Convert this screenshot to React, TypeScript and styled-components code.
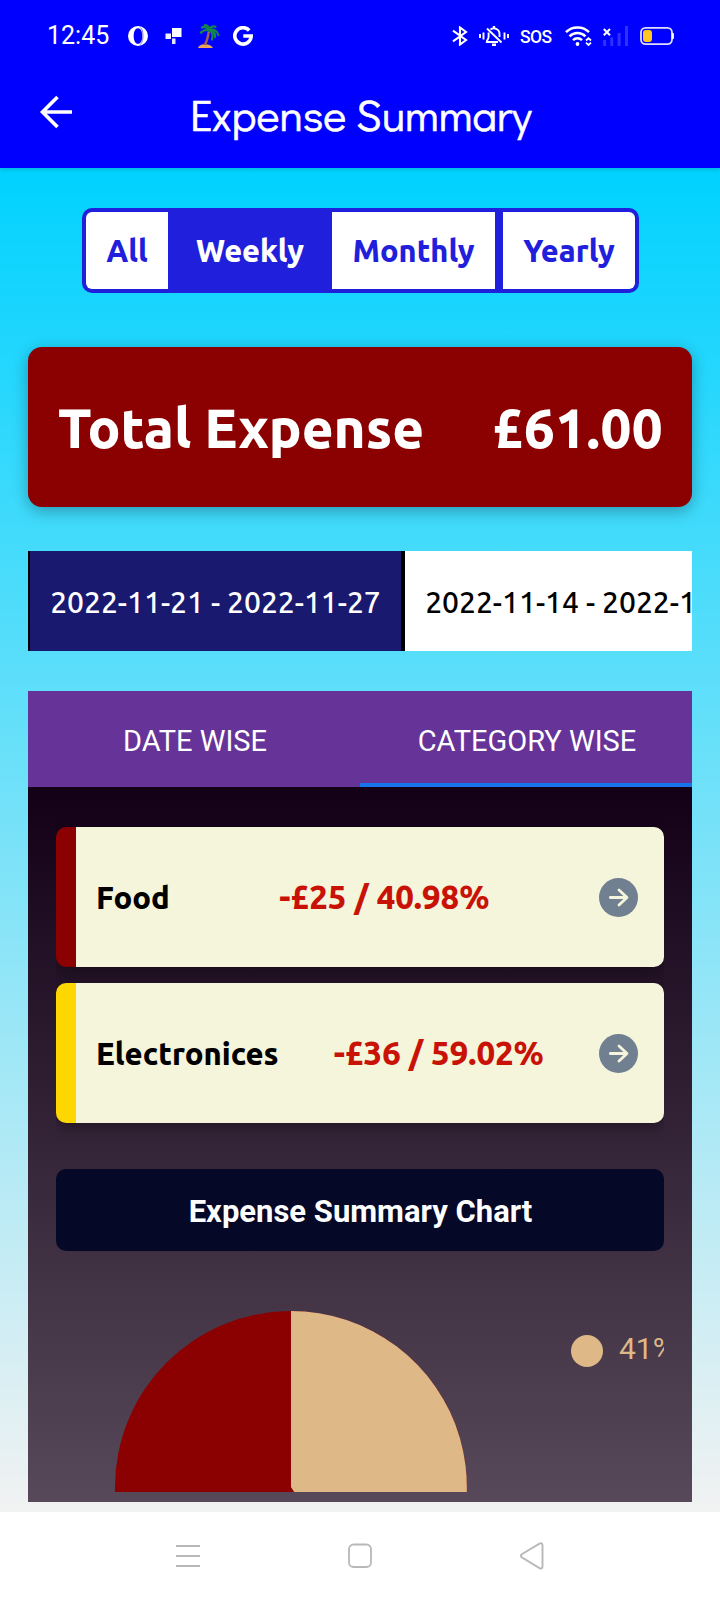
import React from "react";
import styled, { createGlobalStyle } from "styled-components";

const GlobalStyle = createGlobalStyle`
  *, *::before, *::after { box-sizing: border-box; }
  body { margin: 0; background: #fff; }
  button { border: 0; margin: 0; padding: 0; background: none; font: inherit; color: inherit; }
  svg { display: block; flex: none; }
`;

const ubuntu = `"Ubuntu", "Noto Sans", sans-serif`;
const roboto = `Roboto, sans-serif`;

const Screen = styled.div`
  width: 720px;
  height: 1600px;
  display: flex;
  flex-direction: column;
  overflow: hidden;
  font-family: ${ubuntu};
`;

const Header = styled.header`
  flex: none;
  height: 168px;
  background: #0000ff;
  color: #fff;
  box-shadow: 0 1px 5px rgba(0, 0, 0, 0.16);
  z-index: 1;
`;

const StatusBar = styled.div`
  height: 72px;
  padding: 0 46px 0 47px;
  display: flex;
  justify-content: space-between;
  align-items: center;
`;

const StatusGroup = styled.div<{ $gap: number }>`
  display: flex;
  align-items: center;
  gap: ${(p) => p.$gap}px;
`;

const Clock = styled.span`
  font: 400 25px/36px ${roboto};
  width: 68px;
`;

const Sos = styled.span`
  font: 500 17.5px/20px ${roboto};
  letter-spacing: -0.6px;
  width: 34px;
  padding-top: 2px;
`;

const AppBar = styled.div`
  height: 96px;
  padding: 0 0 16px 39px;
  display: flex;
  align-items: center;
`;

const Title = styled.h1`
  margin: 3px 0 0 117px;
  font: 400 43.8px/56px "Didact Gothic", Lato, sans-serif;
  -webkit-text-stroke: 0.6px #fff;
  white-space: nowrap;
`;

const Body = styled.main`
  flex: none;
  height: 1344px;
  padding: 40px 28px 0;
  display: flex;
  flex-direction: column;
  background: linear-gradient(#00d2ff, #f2f2f2);
`;

const Segments = styled.div`
  align-self: center;
  width: 557px;
  height: 85px;
  display: flex;
  border: 4px solid #1f1fdc;
  border-radius: 10px;
  background: #1f1fdc;
  overflow: hidden;
`;

const Segment = styled.button<{ $width: number; $active?: boolean; $gapBefore?: number }>`
  flex: none;
  width: ${(p) => p.$width}px;
  margin-left: ${(p) => p.$gapBefore ?? 0}px;
  padding-left: 1px;
  background: ${(p) => (p.$active ? "#1f1fdc" : "#fff")};
  color: ${(p) => (p.$active ? "#fff" : "#1f1fdc")};
  font: 800 30.7px/40px ${ubuntu};
`;

const TotalCard = styled.section`
  flex: none;
  height: 160px;
  margin-top: 54px;
  padding: 0 29px 0 30px;
  display: flex;
  justify-content: space-between;
  align-items: center;
  border-radius: 14px;
  background: #8b0000;
  color: #fff;
  font-size: 54.6px;
  font-weight: 800;
  white-space: nowrap;
  box-shadow: 0 4px 16px rgba(0, 0, 0, 0.3);
`;

const TotalAmount = styled.span`
  letter-spacing: 0.5px;
`;

const DateStrip = styled.div`
  flex: none;
  height: 100px;
  margin-top: 44px;
  display: flex;
  overflow: hidden;
`;

const DateRange = styled.button<{ $active?: boolean }>`
  flex: none;
  width: 375px;
  padding-top: 1px;
  border: solid #000;
  border-width: 0 2px;
  background: ${(p) => (p.$active ? "#191970" : "#fff")};
  color: ${(p) => (p.$active ? "#fff" : "#000")};
  font: 500 30px/40px ${ubuntu};
  white-space: nowrap;
`;

const Panel = styled.section`
  flex: none;
  margin-top: 40px;
  height: 811px;
  display: flex;
  flex-direction: column;
`;

const Tabs = styled.div`
  flex: none;
  height: 96px;
  display: grid;
  grid-template-columns: 1fr 1fr;
  background: #663399;
`;

const Tab = styled.button<{ $active?: boolean }>`
  padding: 7px 0 0 2px;
  border-bottom: 4px solid ${(p) => (p.$active ? "#1774ea" : "transparent")};
  color: #fff;
  font: 400 29px/36px ${roboto};
`;

const PanelBody = styled.div`
  height: 715px;
  padding: 0 28px 10px;
  background: linear-gradient(#130017, #574959);
`;

const CategoryList = styled.div`
  padding: 40px 0 46px;
  display: flex;
  flex-direction: column;
  gap: 16px;
  overflow: hidden;
`;

const CategoryCard = styled.div<{ $color: string }>`
  height: 140px;
  padding: 0 26px 0 20px;
  display: flex;
  justify-content: space-between;
  align-items: center;
  border-left: 20px solid ${(p) => p.$color};
  border-radius: 10px;
  background: #f5f5dc;
  box-shadow: 0 4px 14px rgba(0, 0, 0, 0.35);
`;

const CategoryName = styled.span`
  padding-top: 1px;
  font: 800 31px/40px ${ubuntu};
  color: #000;
`;

const Amount = styled.span`
  font: 800 33px/42px ${ubuntu};
  color: #c91206;
  white-space: nowrap;
`;

const ChartTitle = styled.div`
  height: 82px;
  padding: 3px 0 0 1px;
  display: flex;
  justify-content: center;
  align-items: center;
  border-radius: 10px;
  background: #060827;
  color: #fff;
  font: 700 31px/40px ${roboto};
`;

const Chart = styled.div`
  height: 241px;
  display: flex;
  overflow: hidden;
`;

const Legend = styled.div`
  flex: none;
  height: 32px;
  margin: 84px 0 0 104px;
  display: flex;
  gap: 16px;
  color: #deb887;
  font: 400 30px/28px ${roboto};
`;

const LegendDot = styled.span`
  width: 32px;
  height: 32px;
  border-radius: 50%;
  background: #deb887;
`;

const NavBar = styled.nav`
  height: 88px;
  padding-left: 2px;
  display: flex;
  justify-content: center;
  align-items: center;
  gap: 148px;
  background: #fff;
`;

const OperaIcon = () => (
  <svg width="24" height="20" viewBox="0 0 24 20" fill="#fff">
    <path fillRule="evenodd" d="M10 0a10 10 0 1 0 0 20a10 10 0 0 0 0-20ZM10 2.200c2.700 0 4.300 3.300 4.300 7.800s-1.600 7.800-4.300 7.800S5.700 14.500 5.700 10S7.300 2.200 10 2.200Z" />
    <path d="M12.500 1.400c3 2.800 3.800 12.800-.2 17.300" fill="none" stroke="#5c5cff" strokeWidth=".8" />
  </svg>
);

const BlocksIcon = () => (
  <svg width="20" height="17" viewBox="0 0 20 17">
    <path d="M7 0H16.500v9H7Z" fill="#fff" />
    <path d="M.5 5.500H6V11H.5Z" fill="#f0f0ff" />
    <path d="M7 10.500H10.500V16H7Z" fill="#e4e4ff" />
  </svg>
);

const PalmIcon = () => (
  <svg width="22" height="24" viewBox="0 0 22 24" fill="none">
    <path d="M0 24c.5-2.300 3.300-3.700 7-3.700s7 1.400 8 3.700Z" fill="#e9a65a" />
    <path d="M10.800 7.500C10.200 12 9 17 6.800 21" stroke="#a5604c" strokeWidth="2.400" />
    <g stroke="#14864d" strokeWidth="2.300" strokeLinecap="round" strokeLinejoin="round">
      <path d="M11 6.500C8.500 5 5.500 6.500 3 8.500" />
      <path d="M11 6C9 3 6 2.500 4 3.500" />
      <path d="M11 6C11 3.500 9.500 1.500 7 1.200" />
      <path d="M11 6c1.500-2.800 4-4.300 6.500-3.300" />
      <path d="M11 6.500c4-1.800 8-.2 9.500 4.500" />
      <path d="M11 6.500c3.500.8 4.500 4.500 3 9" />
      <path d="M12 6.500c3.500.3 5.300 2.500 5 6.500" />
    </g>
  </svg>
);

const GoogleIcon = () => (
  <svg width="20" height="20" viewBox="0 0 20 20" fill="none" stroke="#fff" strokeWidth="3.600">
    <path d="M16.200 4.500A8.200 8.200 0 1 0 18.200 10H10.300" />
  </svg>
);

const BluetoothIcon = () => (
  <svg width="16" height="20" viewBox="0 0 16 20" fill="none" stroke="#fff" strokeWidth="2.100">
    <path d="M1 4.700L14 14L8 18.500V1.500L14 6L1 15.300" />
  </svg>
);

const MutedBellIcon = () => (
  <svg width="30" height="20" viewBox="0 0 30 20" fill="none" stroke="#fff" strokeWidth="1.900">
    <path d="M1 8v4M4.500 6.500v7M25.500 6.500v7M29 8v4" />
    <path d="M15 0v2.500M13 18.700h4" strokeWidth="2.400" />
    <path d="M11.500 3.500C14.500 1.200 20.500 2.500 20.500 8v3M9.600 6.500V11c0 2-1.600 2.500-1.800 5H19" />
    <path d="M8 2.500L22.500 16.500" />
  </svg>
);

const WifiIcon = () => (
  <svg width="27" height="20" viewBox="0 0 27 20" fill="none" stroke="#fff" strokeWidth="2.500">
    <path d="M1 6.200C7-.2 18-.2 24 6.200" />
    <path d="M4.500 10.400c4.500-4.500 11.500-4.500 16 0" />
    <path d="M8 14.200c2.500-2.500 6.500-2.500 9 0" />
    <circle cx="12.500" cy="18" r="1.900" fill="#fff" stroke="none" />
    <path d="M21 14.500l2.500-2.200L26 14.500M21 16.700l2.500 2.300l2.500-2.300" strokeWidth="1.800" />
  </svg>
);

const SignalIcon = () => (
  <svg width="26" height="20" viewBox="0 0 26 20" fill="none">
    <path d="M1.600 14v6M8.800 11.500V20M16.100 7v13M23.500 0v20" stroke="#3030ff" strokeWidth="3" />
    <path d="M.8 3L7 9.300M7 3L.8 9.300" stroke="#fff" strokeWidth="2" />
  </svg>
);

const BatteryIcon = () => (
  <svg width="34" height="20" viewBox="0 0 34 20" fill="none">
    <rect x="1" y="1.800" width="31" height="16.400" rx="4.600" stroke="#dedeff" strokeWidth="1.800" />
    <path d="M32.900 7.200v5.600" stroke="#fff" strokeWidth="2" />
    <rect x="3" y="4" width="9" height="12" rx="3" fill="#ffc820" />
  </svg>
);

const BackArrow = () => (
  <svg width="34" height="34" viewBox="0 0 34 34" fill="none" stroke="#fff" strokeWidth="3.600">
    <path d="M33 17H4M18.500 2L3.500 17l15 15" />
  </svg>
);

const GoIcon = () => (
  <svg width="39" height="39" viewBox="0 0 39 39" fill="none">
    <circle cx="19.500" cy="19.500" r="19.500" fill="#708090" />
    <path d="M11.300 19.500H27.500M20 12l8 7.500l-8 7.500" stroke="#f5f5dc" strokeWidth="2.800" strokeLinecap="round" strokeLinejoin="round" />
  </svg>
);

const Pie = () => (
  <svg width="411" height="241" viewBox="0 0 411 241">
    <circle cx="235" cy="236" r="176" fill="#8b0000" />
    <path d="M235 236V60A176 176 0 0 1 329.500 384.400Z" fill="#deb887" />
  </svg>
);

const RecentsIcon = () => (
  <svg width="24" height="28" viewBox="0 0 24 28" stroke="#b8b8b8" strokeWidth="2">
    <path d="M0 4h24M0 14h24M0 24h24" />
  </svg>
);

const HomeIcon = () => (
  <svg width="24" height="28" viewBox="0 0 24 28" fill="none" stroke="#b8b8b8" strokeWidth="1.800">
    <rect x="1" y="2.500" width="22" height="22.500" rx="4.500" />
  </svg>
);

const TriangleIcon = () => (
  <svg width="26" height="28" viewBox="1.500 0 26 28" fill="none" stroke="#b8b8b8" strokeWidth="1.900">
    <path d="M3.200 12.300L21 1.600Q23.800 .4 24 3.100V24.600Q23.800 27.400 21 26.100L3.200 15.300Q1.700 13.800 3.200 12.300Z" />
  </svg>
);

const categories = [
  { name: "Food", color: "#8b0000", amount: "-£25 / 40.98%" },
  { name: "Electronices", color: "#ffd700", amount: "-£36 / 59.02%" },
];

export default function App() {
  return (
    <Screen>
      <GlobalStyle />
      <Header>
        <StatusBar>
          <StatusGroup $gap={13}>
            <Clock>12:45</Clock>
            <OperaIcon />
            <BlocksIcon />
            <PalmIcon />
            <GoogleIcon />
          </StatusGroup>
          <StatusGroup $gap={11}>
            <BluetoothIcon />
            <MutedBellIcon />
            <Sos>SOS</Sos>
            <WifiIcon />
            <SignalIcon />
            <BatteryIcon />
          </StatusGroup>
        </StatusBar>
        <AppBar>
          <BackArrow />
          <Title>Expense Summary</Title>
        </AppBar>
      </Header>
      <Body>
        <Segments>
          <Segment $width={82}>All</Segment>
          <Segment $width={164} $active>Weekly</Segment>
          <Segment $width={163}>Monthly</Segment>
          <Segment $width={132} $gapBefore={8}>Yearly</Segment>
        </Segments>
        <TotalCard>
          <span>Total Expense</span>
          <TotalAmount>£61.00</TotalAmount>
        </TotalCard>
        <DateStrip>
          <DateRange $active>2022-11-21 - 2022-11-27</DateRange>
          <DateRange>2022-11-14 - 2022-11-20</DateRange>
        </DateStrip>
        <Panel>
          <Tabs>
            <Tab>DATE WISE</Tab>
            <Tab $active>CATEGORY WISE</Tab>
          </Tabs>
          <PanelBody>
            <CategoryList>
              {categories.map((c) => (
                <CategoryCard key={c.name} $color={c.color}>
                  <CategoryName>{c.name}</CategoryName>
                  <Amount>{c.amount}</Amount>
                  <GoIcon />
                </CategoryCard>
              ))}
            </CategoryList>
            <ChartTitle>Expense Summary Chart</ChartTitle>
            <Chart>
              <Pie />
              <Legend>
                <LegendDot />
                41%
              </Legend>
            </Chart>
          </PanelBody>
        </Panel>
      </Body>
      <NavBar>
        <RecentsIcon />
        <HomeIcon />
        <TriangleIcon />
      </NavBar>
    </Screen>
  );
}
